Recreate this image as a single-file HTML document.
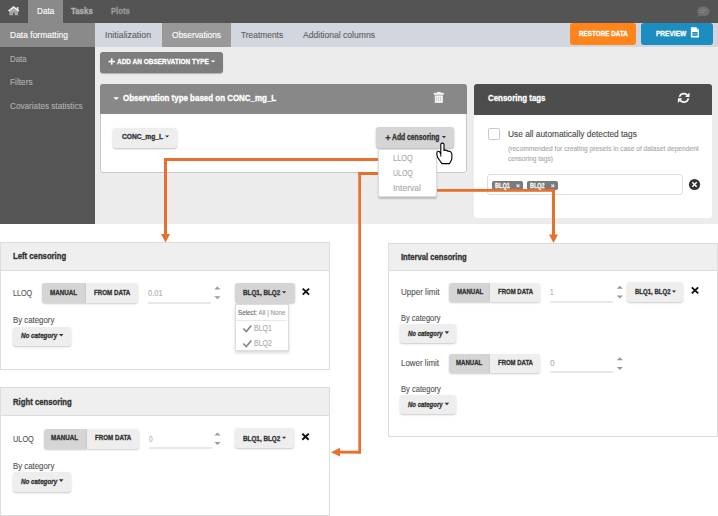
<!DOCTYPE html><html><head><meta charset="utf-8"><style>html,body{margin:0;padding:0;width:718px;height:516px;overflow:hidden;position:relative;background:#fff}body>div{position:absolute}.t{position:absolute;white-space:nowrap;font-family:"Liberation Sans",sans-serif;transform-origin:0 0;-webkit-text-stroke:0.12px currentColor}.b{-webkit-text-stroke:0.32px currentColor}</style></head><body>
<div style="position:absolute;left:0px;top:0px;width:718px;height:516px;background:#fff;"></div>
<div style="position:absolute;left:0px;top:0px;width:718px;height:23px;background:#545454;"></div>
<div style="position:absolute;left:28px;top:0px;width:35px;height:23px;background:#8a8a8a;"></div>
<div style="position:absolute;left:0px;top:23px;width:95px;height:201px;background:#555555;"></div>
<div style="position:absolute;left:0px;top:23px;width:95px;height:24px;background:#8a8a8a;"></div>
<div style="position:absolute;left:95px;top:23px;width:623px;height:24px;background:#d2d6de;"></div>
<div style="position:absolute;left:162px;top:23px;width:69px;height:24px;background:#999999;"></div>
<div style="position:absolute;left:95px;top:47px;width:623px;height:177px;background:#ececec;"></div>
<div style="position:absolute;left:570px;top:23px;width:66px;height:22px;background:#ff851b;border-radius:3px;"></div>
<div style="position:absolute;left:641px;top:23px;width:72px;height:22px;background:#1b8dc1;border-radius:3px;"></div>
<div style="position:absolute;left:100px;top:52px;width:123px;height:21px;background:#7d7d7d;border-radius:3px;box-shadow:0 1px 1px rgba(0,0,0,.25);"></div>
<div style="position:absolute;left:100px;top:84px;width:367px;height:89px;background:#ffffff;border:1px solid #c9c9c9;box-sizing:border-box;border-radius:3px;"></div>
<div style="position:absolute;left:100px;top:84px;width:367px;height:30px;background:#888888;border-radius:3px 3px 0 0;"></div>
<div style="position:absolute;left:113px;top:128px;width:64px;height:20px;background:#eeeeee;border-radius:3px;box-shadow:0 1px 2px rgba(0,0,0,.25);"></div>
<div style="position:absolute;left:376px;top:127px;width:78px;height:21px;background:#d5d5d5;border-radius:3px;box-shadow:0 1px 2px rgba(0,0,0,.3);"></div>
<div style="position:absolute;left:474.3px;top:84px;width:238.2px;height:133.8px;background:#ffffff;border-radius:3px;"></div>
<div style="position:absolute;left:474.3px;top:84px;width:238.2px;height:30.700000000000003px;background:#4d4d4d;border-radius:3px 3px 0 0;"></div>
<div style="position:absolute;left:487.5px;top:127.8px;width:12.199999999999989px;height:11.899999999999991px;background:#fff;border:1.2px solid #c5cad3;box-sizing:border-box;border-radius:2px;"></div>
<div style="position:absolute;left:487px;top:174px;width:196px;height:21px;background:#fff;border:1px solid #dedede;box-sizing:border-box;border-radius:3px;"></div>
<div style="position:absolute;left:492px;top:181px;width:31px;height:9px;background:#7b7b7b;border-radius:2px;"></div>
<div style="position:absolute;left:527px;top:181px;width:31px;height:9px;background:#7b7b7b;border-radius:2px;"></div>
<div style="position:absolute;left:0px;top:242px;width:330px;height:128px;background:#fff;border:1px solid #dddddd;box-sizing:border-box;"></div>
<div style="position:absolute;left:0px;top:242px;width:330px;height:29px;background:#efefef;border:1px solid #dddddd;box-sizing:border-box;"></div>
<div style="position:absolute;left:0px;top:387px;width:330px;height:129px;background:#fff;border:1px solid #dddddd;box-sizing:border-box;"></div>
<div style="position:absolute;left:0px;top:387px;width:330px;height:29px;background:#efefef;border:1px solid #dddddd;box-sizing:border-box;"></div>
<div style="position:absolute;left:388px;top:243px;width:330px;height:194px;background:#fff;border:1px solid #dddddd;box-sizing:border-box;"></div>
<div style="position:absolute;left:388px;top:243px;width:330px;height:28px;background:#efefef;border:1px solid #dddddd;box-sizing:border-box;"></div>
<div style="position:absolute;left:42.3px;top:283px;width:43.7px;height:20.30000000000001px;background:#d5d5d5;border-radius:3px 0 0 3px;box-shadow:0 1px 2px rgba(0,0,0,.2);"></div>
<div style="position:absolute;left:86px;top:283px;width:52px;height:20.30000000000001px;background:#eeeeee;border-radius:0 3px 3px 0;box-shadow:0 1px 2px rgba(0,0,0,.2);"></div>
<div style="position:absolute;left:147.8px;top:301.8px;width:63.0px;height:1.8000000000000114px;background:#e8e8e8;"></div>
<div style="position:absolute;left:234.5px;top:282.7px;width:60.30000000000001px;height:20.30000000000001px;background:#d5d5d5;border-radius:3px;box-shadow:0 1px 2px rgba(0,0,0,.22);"></div>
<div style="position:absolute;left:13px;top:327px;width:58px;height:19px;background:#eeeeee;border-radius:3px;box-shadow:0 1px 2px rgba(0,0,0,.22);"></div>
<div style="position:absolute;left:43.8px;top:428.6px;width:43.2px;height:20.0px;background:#d5d5d5;border-radius:3px 0 0 3px;box-shadow:0 1px 2px rgba(0,0,0,.2);"></div>
<div style="position:absolute;left:87px;top:428.6px;width:52px;height:20.0px;background:#eeeeee;border-radius:0 3px 3px 0;box-shadow:0 1px 2px rgba(0,0,0,.2);"></div>
<div style="position:absolute;left:148.8px;top:447.2px;width:63.0px;height:1.8000000000000114px;background:#e8e8e8;"></div>
<div style="position:absolute;left:235px;top:428px;width:59px;height:20px;background:#eeeeee;border-radius:3px;box-shadow:0 1px 2px rgba(0,0,0,.22);"></div>
<div style="position:absolute;left:13px;top:472px;width:58px;height:20px;background:#eeeeee;border-radius:3px;box-shadow:0 1px 2px rgba(0,0,0,.22);"></div>
<div style="position:absolute;left:449px;top:283px;width:41px;height:19px;background:#d5d5d5;border-radius:3px 0 0 3px;box-shadow:0 1px 2px rgba(0,0,0,.2);"></div>
<div style="position:absolute;left:490px;top:283px;width:50px;height:19px;background:#eeeeee;border-radius:0 3px 3px 0;box-shadow:0 1px 2px rgba(0,0,0,.2);"></div>
<div style="position:absolute;left:549.9px;top:300.8px;width:63.30000000000007px;height:1.8000000000000114px;background:#e8e8e8;"></div>
<div style="position:absolute;left:627px;top:282px;width:56px;height:20px;background:#eeeeee;border-radius:3px;box-shadow:0 1px 2px rgba(0,0,0,.22);"></div>
<div style="position:absolute;left:400px;top:324px;width:56px;height:19px;background:#eeeeee;border-radius:3px;box-shadow:0 1px 2px rgba(0,0,0,.22);"></div>
<div style="position:absolute;left:449px;top:354px;width:41px;height:19px;background:#d5d5d5;border-radius:3px 0 0 3px;box-shadow:0 1px 2px rgba(0,0,0,.2);"></div>
<div style="position:absolute;left:490px;top:354px;width:50px;height:19px;background:#eeeeee;border-radius:0 3px 3px 0;box-shadow:0 1px 2px rgba(0,0,0,.2);"></div>
<div style="position:absolute;left:549.9px;top:371.4px;width:63.30000000000007px;height:1.8000000000000114px;background:#e8e8e8;"></div>
<div style="position:absolute;left:400px;top:395px;width:56px;height:19px;background:#eeeeee;border-radius:3px;box-shadow:0 1px 2px rgba(0,0,0,.22);"></div>
<div style="position:absolute;left:377.6px;top:148.5px;width:59.19999999999999px;height:48.099999999999994px;background:#fff;border:1px solid #dcdcdc;box-sizing:border-box;box-shadow:0 1.5px 2px rgba(0,0,0,.2);border-radius:0 0 2px 2px;"></div>
<div style="position:absolute;left:235.4px;top:303.5px;width:53.400000000000006px;height:47.5px;background:#fff;border:1px solid #dcdcdc;box-sizing:border-box;box-shadow:0 2px 3px rgba(0,0,0,.15);"></div>
<div style="position:absolute;left:236px;top:320px;width:51px;height:1px;background:#e8e8e8;"></div>
<svg style="position:absolute;left:0;top:0;z-index:3" width="718" height="516" viewBox="0 0 718 516"><path d="M9.4 11.5 L13.6 8.3 L18.1 11.5 L18.1 15.2 L14.6 15.2 L14.6 12.4 L13.1 12.4 L13.1 15.2 L9.4 15.2 Z" fill="#a8a8a8"/><path d="M8.6 11.2 L13.6 7.1 L18.8 11.1" fill="none" stroke="#f0f0f0" stroke-width="1.7"/><rect x="16.8" y="7" width="1.6" height="3" fill="#e8e8e8"/><ellipse cx="703.4" cy="11.3" rx="6.3" ry="4.8" fill="#707070"/><path d="M698.5 13.5 L697.3 17 L701.5 15.5Z" fill="#707070"/><rect x="700" y="9.8" width="6.5" height="0.9" fill="#8a8a8a"/><rect x="700" y="12" width="4" height="0.9" fill="#8a8a8a"/><path d="M690.9 27.3 L696.4 27.3 L698.9 29.8 L698.9 37.4 L690.9 37.4Z" fill="#fff"/><path d="M696.6 27.3 L696.6 29.6 L698.9 29.6Z" fill="#7fc0de"/><rect x="692.3" y="32" width="5.3" height="3.8" fill="#1b8dc1"/><rect x="692.3" y="33.6" width="5.3" height="0.6" fill="#bfe0f0"/><rect x="108.5" y="60.75" width="6.4" height="1.6" fill="#fff"/><rect x="110.9" y="58.4" width="1.6" height="6.3" fill="#fff"/><path d="M210.8 60.4 L215.3 60.4 L213.05 62.6Z" fill="#fff"/><rect x="433.8" y="92.8" width="10.1" height="2" fill="#f2f2f2"/><rect x="437" y="91.9" width="3.8" height="1.3" fill="#f2f2f2"/><rect x="434.8" y="95.4" width="8.1" height="7.5" fill="#f2f2f2"/><rect x="436.1" y="96.9" width="0.7" height="4" fill="#c4c4c4"/><rect x="438.1" y="96.9" width="0.7" height="4" fill="#c4c4c4"/><rect x="440.0" y="96.9" width="0.7" height="4" fill="#c4c4c4"/><path d="M113.3 97.3 L119 97.3 L116.15 100Z" fill="#fff"/><path d="M165 135.4 L169.2 135.4 L167.1 137.6Z" fill="#333"/><rect x="385.5" y="137.1" width="5" height="1.3" fill="#333"/><rect x="387.35" y="135.2" width="1.3" height="5.1" fill="#333"/><path d="M441.9 136 L446 136 L443.95 138.3Z" fill="#333"/><g fill="none" stroke="#fff" stroke-width="1.7"><path d="M679.4 96.8 A4.6 4.6 0 0 1 687.4 95.4"/><path d="M688.4 98.3 A4.6 4.6 0 0 1 680.3 100.4"/></g><path d="M689.5 92.5 L689.5 96.9 L685.1 96.9Z" fill="#fff"/><path d="M677.9 103 L677.9 98.2 L682.3 98.2Z" fill="#fff"/><g stroke="#e8e8e8" stroke-width="1.1"><path d="M516.6 184.5 L519.4 187.1 M519.4 184.5 L516.6 187.1"/><path d="M551.4 184.5 L554.2 187.1 M554.2 184.5 L551.4 187.1"/></g><circle cx="694.5" cy="184.5" r="5.6" fill="#333"/><path d="M692.3 182.3 L696.7 186.7 M696.7 182.3 L692.3 186.7" stroke="#fff" stroke-width="1.5"/><path d="M302.7 288.6 L309.09999999999997 294.6 M309.09999999999997 288.6 L302.7 294.6" stroke="#111" stroke-width="1.9"/><path d="M302.3 433.8 L308.7 439.8 M308.7 433.8 L302.3 439.8" stroke="#111" stroke-width="1.9"/><path d="M691.8 287.4 L698.2 293.4 M698.2 287.4 L691.8 293.4" stroke="#111" stroke-width="1.9"/><path d="M214.3 289.6 L217.4 286.6 L220.5 289.6Z" fill="#999"/><path d="M214.3 296.2 L217.4 299.2 L220.5 296.2Z" fill="#999"/><path d="M214.4 435.5 L217.5 432.5 L220.6 435.5Z" fill="#999"/><path d="M214.4 442 L217.5 445 L220.6 442Z" fill="#999"/><path d="M616.6999999999999 288.8 L619.8 285.8 L622.9 288.8Z" fill="#999"/><path d="M616.6999999999999 295.5 L619.8 298.5 L622.9 295.5Z" fill="#999"/><path d="M616.6999999999999 360.2 L619.8 357.2 L622.9 360.2Z" fill="#999"/><path d="M616.6999999999999 367 L619.8 370 L622.9 367Z" fill="#999"/><path d="M282.0 291.3 L286.2 291.3 L284.1 293.6Z" fill="#333"/><path d="M282.0 436.8 L286.2 436.8 L284.1 439.1Z" fill="#333"/><path d="M671.9 290.4 L676.1 290.4 L674.0 292.7Z" fill="#333"/><path d="M58.9 333.9 L63.5 333.9 L61.199999999999996 336.5Z" fill="#333"/><path d="M58.9 479.3 L63.5 479.3 L61.199999999999996 481.90000000000003Z" fill="#333"/><path d="M444.6 331.3 L449.20000000000005 331.3 L446.90000000000003 333.90000000000003Z" fill="#333"/><path d="M444.6 402.7 L449.20000000000005 402.7 L446.90000000000003 405.3Z" fill="#333"/><path d="M243.3 328.5 L246.3 331.5 L251.3 325.5" fill="none" stroke="#888" stroke-width="1.7"/><path d="M243.3 343.5 L246.3 346.5 L251.3 340.5" fill="none" stroke="#888" stroke-width="1.7"/><g fill="#e8702f"><rect x="164" y="158" width="214" height="3"/><rect x="164" y="158" width="3" height="77"/><path d="M161 234 L170 234 L165.5 242.5Z"/><rect x="358.3" y="172" width="19.7" height="3"/><rect x="358.3" y="172" width="2.7" height="281.6"/><rect x="339" y="450.7" width="22" height="2.9"/><path d="M340 447.8 L340 456.6 L331 452.2Z"/><rect x="437" y="189" width="118" height="2.8"/><rect x="552" y="189" width="3" height="46"/><path d="M549 234.5 L558 234.5 L553.5 243Z"/></g><path d="M440.8 153.6 L440.8 144.6 Q440.8 143.1 442.4 143.1 Q444 143.1 444 144.6 L444 150.4 Q446.4 149.7 447.6 151.2 Q450.3 150.7 451.4 152.8 Q452.1 154 451.9 156.2 L451.7 159.6 L449.6 163.6 L442 163.6 L440.3 161.3 L437.6 157.4 Q436.7 155 436.9 152.8 Q437.4 150.7 439.3 151.5 Z" fill="#fff" stroke="#000" stroke-width="1.1" stroke-linejoin="round"/><path d="M440.8 153.6 L440.8 156.6" stroke="#000" stroke-width="1"/></svg>
<div class="t" style="left:36.70px;top:6.50px;font-size:9.06px;line-height:9.06px;color:#fff;font-weight:normal;z-index:4;transform:scaleX(0.9046);">Data</div>
<div class="t b" style="left:71.40px;top:6.50px;font-size:9.06px;line-height:9.06px;color:#b0b0b0;font-weight:bold;z-index:4;transform:scaleX(0.8725);">Tasks</div>
<div class="t b" style="left:111.00px;top:6.50px;font-size:9.06px;line-height:9.06px;color:#9a9a9a;font-weight:bold;z-index:4;transform:scaleX(0.8452);">Plots</div>
<div class="t" style="left:10.40px;top:30.50px;font-size:9.06px;line-height:9.06px;color:#fff;font-weight:normal;z-index:4;transform:scaleX(0.9376);">Data formatting</div>
<div class="t" style="left:10.40px;top:55.49px;font-size:8.84px;line-height:8.84px;color:#b0b0b0;font-weight:normal;z-index:4;transform:scaleX(0.8898);">Data</div>
<div class="t" style="left:10.40px;top:77.79px;font-size:8.84px;line-height:8.84px;color:#b0b0b0;font-weight:normal;z-index:4;transform:scaleX(0.9398);">Filters</div>
<div class="t" style="left:10.40px;top:102.19px;font-size:8.84px;line-height:8.84px;color:#b0b0b0;font-weight:normal;z-index:4;transform:scaleX(0.9248);">Covariates statistics</div>
<div class="t" style="left:105.20px;top:31.36px;font-size:8.99px;line-height:8.99px;color:#606060;font-weight:normal;z-index:4;transform:scaleX(0.9818);">Initialization</div>
<div class="t" style="left:171.80px;top:31.36px;font-size:8.99px;line-height:8.99px;color:#fff;font-weight:normal;z-index:4;transform:scaleX(0.9256);">Observations</div>
<div class="t" style="left:241.30px;top:31.36px;font-size:8.99px;line-height:8.99px;color:#606060;font-weight:normal;z-index:4;transform:scaleX(0.9333);">Treatments</div>
<div class="t" style="left:303.40px;top:31.36px;font-size:8.99px;line-height:8.99px;color:#606060;font-weight:normal;z-index:4;transform:scaleX(0.9546);">Additional columns</div>
<div class="t b" style="left:578.60px;top:29.67px;font-size:7.68px;line-height:7.68px;color:#fff;font-weight:bold;z-index:4;transform:scaleX(0.8253);">RESTORE DATA</div>
<div class="t b" style="left:655.70px;top:29.67px;font-size:7.68px;line-height:7.68px;color:#fff;font-weight:bold;z-index:4;transform:scaleX(0.8533);">PREVIEW</div>
<div class="t b" style="left:116.70px;top:58.05px;font-size:7.83px;line-height:7.83px;color:#fff;font-weight:bold;z-index:4;transform:scaleX(0.8275);">ADD AN OBSERVATION TYPE</div>
<div class="t b" style="left:122.60px;top:94.07px;font-size:8.62px;line-height:8.62px;color:#fff;font-weight:bold;z-index:4;transform:scaleX(0.9228);">Observation type based on CONC_mg_L</div>
<div class="t b" style="left:121.70px;top:132.82px;font-size:7.97px;line-height:7.97px;color:#333;font-weight:bold;z-index:4;transform:scaleX(0.8341);">CONC_mg_L</div>
<div class="t b" style="left:392.20px;top:133.23px;font-size:8.55px;line-height:8.55px;color:#333;font-weight:bold;z-index:4;transform:scaleX(0.7937);">Add censoring</div>
<div class="t" style="left:393.20px;top:153.69px;font-size:8.84px;line-height:8.84px;color:#aaa;font-weight:normal;z-index:4;transform:scaleX(0.8403);">LLOQ</div>
<div class="t" style="left:393.20px;top:168.71px;font-size:8.70px;line-height:8.70px;color:#aaa;font-weight:normal;z-index:4;transform:scaleX(0.8041);">ULOQ</div>
<div class="t" style="left:393.20px;top:184.34px;font-size:9.13px;line-height:9.13px;color:#aaa;font-weight:normal;z-index:4;transform:scaleX(0.9319);">Interval</div>
<div class="t b" style="left:487.90px;top:93.96px;font-size:8.99px;line-height:8.99px;color:#fff;font-weight:bold;z-index:4;transform:scaleX(0.8791);">Censoring tags</div>
<div class="t" style="left:508.00px;top:129.86px;font-size:8.41px;line-height:8.41px;color:#4a4a4a;font-weight:normal;z-index:4;transform:scaleX(0.9915);">Use all automatically detected tags</div>
<div class="t" style="left:508.00px;top:146.36px;font-size:6.52px;line-height:6.52px;color:#aaa;font-weight:normal;z-index:4;transform:scaleX(1.0203);">(recommended for creating presets in case of dataset dependent</div>
<div class="t" style="left:508.00px;top:156.16px;font-size:6.52px;line-height:6.52px;color:#aaa;font-weight:normal;z-index:4;transform:scaleX(1.0079);">censoring tags)</div>
<div class="t b" style="left:494.90px;top:183.31px;font-size:6.81px;line-height:6.81px;color:#f4f4f4;font-weight:bold;z-index:4;transform:scaleX(0.8158);">BLQ1</div>
<div class="t b" style="left:530.30px;top:183.31px;font-size:6.81px;line-height:6.81px;color:#f4f4f4;font-weight:bold;z-index:4;transform:scaleX(0.7993);">BLQ2</div>
<div class="t b" style="left:13.10px;top:251.96px;font-size:8.40px;line-height:8.40px;color:#333;font-weight:bold;z-index:4;transform:scaleX(0.9220);">Left censoring</div>
<div class="t" style="left:13.20px;top:289.14px;font-size:8.30px;line-height:8.30px;color:#555;font-weight:normal;z-index:4;transform:scaleX(0.8672);">LLOQ</div>
<div class="t b" style="left:50.40px;top:288.51px;font-size:7.40px;line-height:7.40px;color:#333;font-weight:bold;z-index:4;transform:scaleX(0.8460);">MANUAL</div>
<div class="t b" style="left:93.50px;top:288.51px;font-size:7.40px;line-height:7.40px;color:#333;font-weight:bold;z-index:4;transform:scaleX(0.8370);">FROM DATA</div>
<div class="t" style="left:147.80px;top:289.05px;font-size:8.30px;line-height:8.30px;color:#b0b0b0;font-weight:normal;z-index:4;transform:scaleX(0.9037);">0.01</div>
<div class="t b" style="left:242.90px;top:289.08px;font-size:7.20px;line-height:7.20px;color:#333;font-weight:bold;z-index:4;transform:scaleX(0.8809);">BLQ1, BLQ2</div>
<div class="t" style="left:13.20px;top:316.25px;font-size:8.30px;line-height:8.30px;color:#555;font-weight:normal;z-index:4;transform:scaleX(0.9427);">By category</div>
<div class="t b" style="left:20.60px;top:332.23px;font-size:7.50px;line-height:7.50px;color:#333;font-weight:bold;z-index:4;font-style:italic;transform:scaleX(0.8349);">No category</div>
<div class="t" style="left:238.10px;top:309.47px;font-size:7.68px;line-height:7.68px;color:#666;font-weight:normal;z-index:4;transform:scaleX(0.8148);">Select: <span style="color:#999">All | None</span></div>
<div class="t" style="left:254.40px;top:324.25px;font-size:8.30px;line-height:8.30px;color:#aaa;font-weight:normal;z-index:4;transform:scaleX(0.8436);">BLQ1</div>
<div class="t" style="left:254.40px;top:338.75px;font-size:8.30px;line-height:8.30px;color:#aaa;font-weight:normal;z-index:4;transform:scaleX(0.8436);">BLQ2</div>
<div class="t b" style="left:13.10px;top:398.46px;font-size:8.40px;line-height:8.40px;color:#333;font-weight:bold;z-index:4;transform:scaleX(0.9224);">Right censoring</div>
<div class="t" style="left:13.20px;top:434.64px;font-size:8.30px;line-height:8.30px;color:#555;font-weight:normal;z-index:4;transform:scaleX(0.8845);">ULOQ</div>
<div class="t b" style="left:51.40px;top:434.01px;font-size:7.40px;line-height:7.40px;color:#333;font-weight:bold;z-index:4;transform:scaleX(0.8460);">MANUAL</div>
<div class="t b" style="left:94.50px;top:434.01px;font-size:7.40px;line-height:7.40px;color:#333;font-weight:bold;z-index:4;transform:scaleX(0.8370);">FROM DATA</div>
<div class="t" style="left:148.80px;top:434.55px;font-size:8.30px;line-height:8.30px;color:#b0b0b0;font-weight:normal;z-index:4;transform:scaleX(0.8000);">0</div>
<div class="t b" style="left:242.90px;top:434.58px;font-size:7.20px;line-height:7.20px;color:#333;font-weight:bold;z-index:4;transform:scaleX(0.8809);">BLQ1, BLQ2</div>
<div class="t" style="left:13.20px;top:461.75px;font-size:8.30px;line-height:8.30px;color:#555;font-weight:normal;z-index:4;transform:scaleX(0.9427);">By category</div>
<div class="t b" style="left:20.60px;top:477.73px;font-size:7.50px;line-height:7.50px;color:#333;font-weight:bold;z-index:4;font-style:italic;transform:scaleX(0.8349);">No category</div>
<div class="t b" style="left:400.60px;top:252.56px;font-size:8.40px;line-height:8.40px;color:#333;font-weight:bold;z-index:4;transform:scaleX(0.9107);">Interval censoring</div>
<div class="t" style="left:400.60px;top:287.55px;font-size:8.30px;line-height:8.30px;color:#555;font-weight:normal;z-index:4;transform:scaleX(0.9683);">Upper limit</div>
<div class="t b" style="left:456.50px;top:288.01px;font-size:7.40px;line-height:7.40px;color:#333;font-weight:bold;z-index:4;transform:scaleX(0.8211);">MANUAL</div>
<div class="t b" style="left:497.80px;top:288.01px;font-size:7.40px;line-height:7.40px;color:#333;font-weight:bold;z-index:4;transform:scaleX(0.8116);">FROM DATA</div>
<div class="t" style="left:550.40px;top:287.64px;font-size:8.30px;line-height:8.30px;color:#b0b0b0;font-weight:normal;z-index:4;transform:scaleX(0.7784);">1</div>
<div class="t b" style="left:634.60px;top:288.08px;font-size:7.20px;line-height:7.20px;color:#333;font-weight:bold;z-index:4;transform:scaleX(0.8407);">BLQ1, BLQ2</div>
<div class="t" style="left:400.80px;top:313.84px;font-size:8.30px;line-height:8.30px;color:#555;font-weight:normal;z-index:4;transform:scaleX(0.9016);">By category</div>
<div class="t b" style="left:408.20px;top:330.12px;font-size:7.50px;line-height:7.50px;color:#333;font-weight:bold;z-index:4;font-style:italic;transform:scaleX(0.7980);">No category</div>
<div class="t" style="left:400.70px;top:358.94px;font-size:8.30px;line-height:8.30px;color:#555;font-weight:normal;z-index:4;transform:scaleX(0.9582);">Lower limit</div>
<div class="t b" style="left:456.20px;top:358.91px;font-size:7.40px;line-height:7.40px;color:#333;font-weight:bold;z-index:4;transform:scaleX(0.8211);">MANUAL</div>
<div class="t b" style="left:497.60px;top:358.91px;font-size:7.40px;line-height:7.40px;color:#333;font-weight:bold;z-index:4;transform:scaleX(0.8069);">FROM DATA</div>
<div class="t" style="left:550.20px;top:359.05px;font-size:8.30px;line-height:8.30px;color:#b0b0b0;font-weight:normal;z-index:4;transform:scaleX(0.9946);">0</div>
<div class="t" style="left:400.70px;top:384.94px;font-size:8.30px;line-height:8.30px;color:#555;font-weight:normal;z-index:4;transform:scaleX(0.9107);">By category</div>
<div class="t b" style="left:408.20px;top:400.62px;font-size:7.50px;line-height:7.50px;color:#333;font-weight:bold;z-index:4;font-style:italic;transform:scaleX(0.7980);">No category</div>
</body></html>
